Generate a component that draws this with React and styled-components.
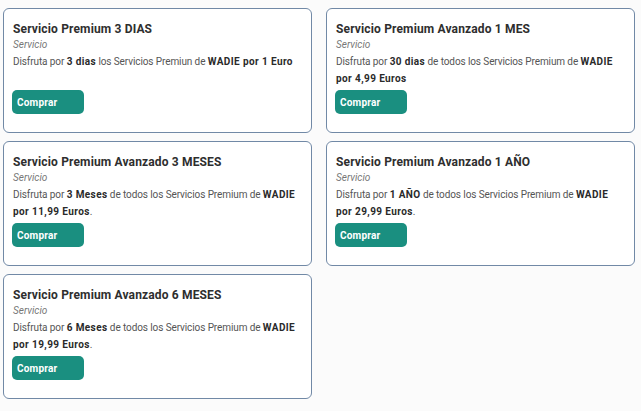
import React from 'react';
import styled, { createGlobalStyle } from 'styled-components';

const GlobalStyle = createGlobalStyle`
  body {
    margin: 0;
    background: #fbfbfb;
    font-family: Roboto, "Liberation Sans", sans-serif;
  }
`;

const Grid = styled.div`
  display: grid;
  grid-template-columns: 309px 309px;
  column-gap: 14px;
  row-gap: 8px;
  padding: 8px 0 0 3px;
`;

const Card = styled.div`
  box-sizing: border-box;
  height: 125px;
  background: #fff;
  border: 1.5px solid #7189a6;
  border-radius: 6px;
  padding: 12px 9px 0 9px;
`;

const Title = styled.p`
  margin: 0;
  font-size: 12px;
  line-height: 16px;
  font-weight: 700;
  letter-spacing: 0.15px;
  color: #2e2e2e;
`;

const Kind = styled.p`
  margin: 0;
  font-size: 10px;
  line-height: 16px;
  font-style: italic;
  color: #777;
`;

const Desc = styled.p`
  margin: 0;
  min-height: 34px;
  font-size: 10px;
  line-height: 17px;
  color: #555;
  white-space: nowrap;
  letter-spacing: -0.1px;

  b {
    font-weight: 700;
    color: #2a2a2a;
    letter-spacing: 0.4px;
  }
`;

const Button = styled.button`
  display: block;
  margin: 3px 0 0 -1px;
  width: 72px;
  height: 24px;
  padding: 0 0 0 5px;
  text-align: left;
  border: none;
  border-radius: 5px;
  background: #1a8f80;
  color: #fff;
  font-family: Roboto, "Liberation Sans", sans-serif;
  font-size: 10px;
  font-weight: 700;
  letter-spacing: 0.2px;
`;

const services = [
  {
    title: 'Servicio Premium 3 DIAS',
    desc: (
      <>
        Disfruta por <b>3 dias</b> los Servicios Premiun de <b>WADIE por 1 Euro</b>
      </>
    ),
  },
  {
    title: 'Servicio Premium Avanzado 1 MES',
    desc: (
      <>
        Disfruta por <b>30 dias</b> de todos los Servicios Premium de <b>WADIE</b>
        <br />
        <b>por 4,99 Euros</b>
      </>
    ),
  },
  {
    title: 'Servicio Premium Avanzado 3 MESES',
    desc: (
      <>
        Disfruta por <b>3 Meses</b> de todos los Servicios Premium de <b>WADIE</b>
        <br />
        <b>por 11,99 Euros</b>.
      </>
    ),
  },
  {
    title: 'Servicio Premium Avanzado 1 AÑO',
    desc: (
      <>
        Disfruta por <b>1 AÑO</b> de todos los Servicios Premium de <b>WADIE</b>
        <br />
        <b>por 29,99 Euros</b>.
      </>
    ),
  },
  {
    title: 'Servicio Premium Avanzado 6 MESES',
    desc: (
      <>
        Disfruta por <b>6 Meses</b> de todos los Servicios Premium de <b>WADIE</b>
        <br />
        <b>por 19,99 Euros</b>.
      </>
    ),
  },
];

export default function App() {
  return (
    <>
      <GlobalStyle />
      <Grid>
        {services.map((s) => (
          <Card key={s.title}>
            <Title>{s.title}</Title>
            <Kind>Servicio</Kind>
            <Desc>{s.desc}</Desc>
            <Button>Comprar</Button>
          </Card>
        ))}
      </Grid>
    </>
  );
}
